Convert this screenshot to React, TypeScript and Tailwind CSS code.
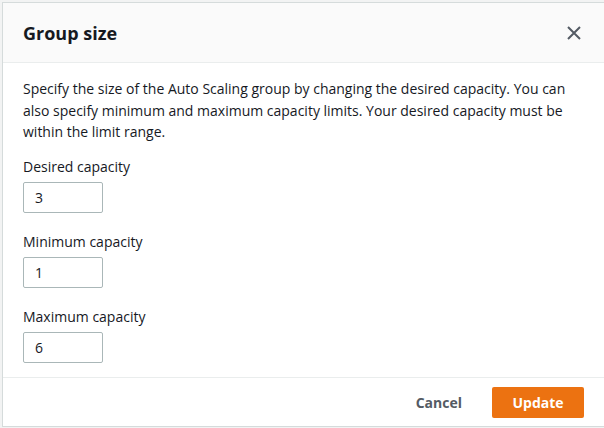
import React from "react";

function Field({ label, value }: { label: string; value: string }) {
  return (
    <div className="flex flex-col">
      <label className="text-[14px] leading-[22px] text-[#16191f]">{label}</label>
      <div className="mt-[4px] flex h-[31px] w-[80px] items-center rounded-[2px] border border-[#aab7b8] bg-white pl-[11px] text-[14px] text-[#16191f]">
        {value}
      </div>
    </div>
  );
}

export default function App() {
  return (
    <div
      className="h-[428px] w-[604px] overflow-hidden bg-[#f2f3f3] pl-[2px] pt-[2px]"
      style={{ fontFamily: '"Open Sans", "Noto Sans", sans-serif' }}
    >
      <div className="flex h-[425px] flex-col border-b border-l border-t border-[#d5dbdb] bg-white">
        <div className="flex h-[60px] items-center justify-between border-b border-[#eaeded] bg-[#fafafa] pl-[20px] pr-[22px]">
          <h2 className="pt-[2px] text-[18px] font-bold text-[#16191f]">Group size</h2>
          <svg width="16" height="16" viewBox="0 0 16 16" fill="none" stroke="#545b64" strokeWidth="2">
            <path d="M2 2l12 12M14 2L2 14" />
          </svg>
        </div>
        <div className="flex flex-1 flex-col border-b border-[#eaeded] pl-[20px] pr-[21px] pt-[15px]">
          <p className="text-[14px] leading-[21.5px] text-[#16191f]">
            Specify the size of the Auto Scaling group by changing the desired capacity. You can also specify minimum and maximum capacity limits. Your desired capacity must be within the limit range.
          </p>
          <div className="mt-[13px] flex flex-col gap-[18px]">
            <Field label="Desired capacity" value="3" />
            <Field label="Minimum capacity" value="1" />
            <Field label="Maximum capacity" value="6" />
          </div>
        </div>
        <div className="flex h-[48px] items-center justify-end gap-[10px] pr-[20px]">
          <button className="h-[31px] px-[20px] text-[14px] font-bold text-[#545b64]">Cancel</button>
          <button className="h-[31px] w-[92px] rounded-[2px] bg-[#ec7211] text-[14px] font-bold text-white">Update</button>
        </div>
      </div>
    </div>
  );
}
